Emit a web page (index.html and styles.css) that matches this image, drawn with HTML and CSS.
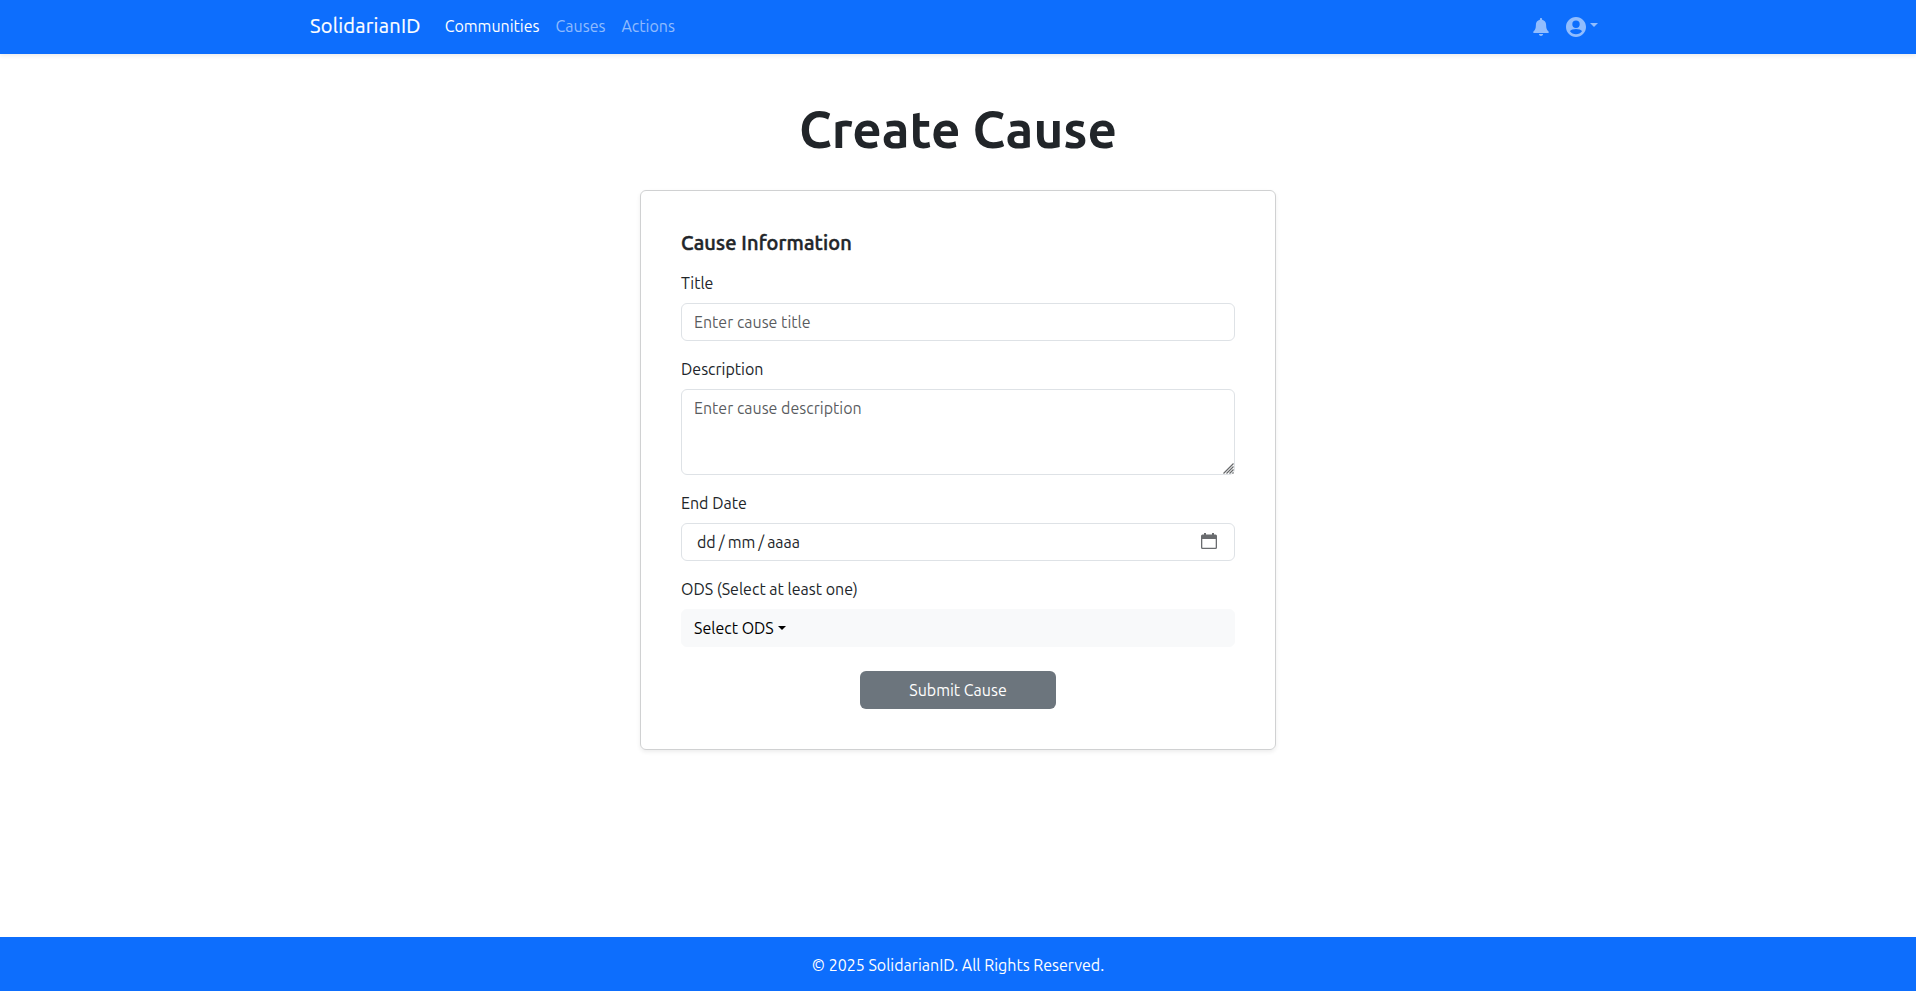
FILE: index.html
```
<!DOCTYPE html>
<html lang="en">
<head>
<meta charset="utf-8">
<title>SolidarianID</title>
<link rel="stylesheet" href="styles.css">
</head>
<body>
<header class="navbar">
  <div class="container">
    <a class="brand">SolidarianID</a>
    <nav class="links">
      <a class="link active">Communities</a>
      <a class="link">Causes</a>
      <a class="link">Actions</a>
    </nav>
    <div class="user">
      <svg class="bell" width="16" height="18" viewBox="0 0 16 18"><path d="M8 0c-.6 0-1.100.5-1.100 1.100v.6C4.300 2.200 2.900 4.200 2.900 6.800c0 3.700-.9 5.200-2.200 6.500-.9.9-.6 1.700.3 1.700h14c.9 0 1.200-.8.3-1.700-1.300-1.300-2.200-2.800-2.200-6.500 0-2.600-1.500-4.600-4-5.100v-.6C9.100.5 8.600 0 8 0zM5.900 16c.2 1.200 1 2 2.100 2s1.900-.8 2.100-2z"/></svg>
      <svg class="avatar" width="20" height="20" viewBox="2 2 20 20"><path d="M12 2C6.480 2 2 6.480 2 12s4.480 10 10 10 10-4.480 10-10S17.520 2 12 2zm0 3.500a3.700 3.700 0 1 1 0 7.400 3.700 3.700 0 0 1 0-7.400zm0 13.700c-2.500 0-4.700-1-6-2.900.5-1.500 3.600-2.300 6-2.300s5.500.8 6 2.300c-1.300 1.900-3.500 2.900-6 2.900z"/></svg>
      <span class="caret"></span>
    </div>
  </div>
</header>
<main class="main">
  <h1 class="page-title">Create Cause</h1>
  <form class="card">
    <h2 class="card-title">Cause Information</h2>
    <div class="field">
      <label class="label" for="title">Title</label>
      <input class="control" id="title" type="text" placeholder="Enter cause title">
    </div>
    <div class="field">
      <label class="label" for="description">Description</label>
      <textarea class="control area" id="description" rows="3" placeholder="Enter cause description"></textarea>
      <svg class="grip" width="11" height="11" viewBox="0 0 11 11"><path d="M0.500 10.500l10-10M3.500 10.500l7-7M6.500 10.500l4-4M9.500 10.500l1-1"/></svg>
    </div>
    <div class="field">
      <span class="label">End Date</span>
      <div class="control date">
        <span class="date-text"><span>dd</span><span>/</span><span>mm</span><span>/</span><span>aaaa</span></span>
        <svg class="calendar" width="16" height="16" viewBox="0 0 16 16"><path fill-rule="evenodd" d="M3 0h2v1.500h6V0h2v1.500h1.500Q16 1.500 16 3v11.500q0 1.500-1.500 1.500h-13Q0 16 0 14.500V3q0-1.500 1.500-1.500H3zM1.300 6v8.200q0 .5.5.5h12.400q.5 0 .5-.5V6z"/></svg>
      </div>
    </div>
    <div class="field">
      <span class="label">ODS (Select at least one)</span>
      <button class="select" type="button">Select ODS<span class="caret"></span></button>
    </div>
    <button class="submit" type="button">Submit Cause</button>
  </form>
</main>
<footer class="footer">© 2025 SolidarianID. All Rights Reserved.</footer>
</body>
</html>
```

FILE: styles.css
```
* { box-sizing: border-box; }
body {
  margin: 0;
  height: 991px;
  display: flex;
  flex-direction: column;
  font: 400 16px/24px Ubuntu, "Noto Sans", sans-serif;
  color: #212529;
  background: #fff;
}
.navbar {
  height: 54px;
  padding-top: 6px;
  background: #0d6efd;
  box-shadow: 0 2px 4px rgba(0, 0, 0, .075);
}
.container {
  width: 1320px;
  height: 40px;
  margin: 0 auto;
  padding: 0 12px;
  display: flex;
  align-items: center;
}
.brand {
  font-size: 20px;
  line-height: 30px;
  letter-spacing: .25px;
  -webkit-text-stroke: .2px;
  color: #fff;
  margin-right: 16px;
}
.links { display: flex; }
.link { padding: 8px; color: rgba(255, 255, 255, .55); }
.link.active { color: #fff; }
.user { margin-left: auto; display: flex; align-items: center; padding-right: 8px; }
.user svg { fill: rgba(255, 255, 255, .55); margin-top: 2px; }
.bell { margin-right: 17px; }
.user .caret { margin-left: 4px; color: rgba(255, 255, 255, .55); margin-top: -2px; }
.caret {
  display: inline-block;
  border-top: 4.8px solid;
  border-left: 4.8px solid transparent;
  border-right: 4.8px solid transparent;
  vertical-align: 4px;
  margin-left: 4px;
}
.main { flex: 1; display: flex; flex-direction: column; align-items: center; padding-top: 44px; }
.page-title {
  margin: 0 0 30px;
  font-size: 51.2px;
  line-height: 62px;
  font-weight: 700;
}
.card {
  width: 636px;
  height: 560px;
  padding: 40px;
  display: flex;
  flex-direction: column;
  border: 1px solid #d0d1d2;
  border-radius: 6px;
  box-shadow: 0 2px 4px rgba(0, 0, 0, .075);
}
.card-title {
  margin: 0 0 16px;
  font-size: 20px;
  line-height: 24px;
  font-weight: 500;
  letter-spacing: .13px;
  -webkit-text-stroke: .5px;
}
.field { position: relative; display: flex; flex-direction: column; margin-bottom: 16px; }
.label { margin-bottom: 8px; }
.control {
  display: block;
  width: 100%;
  height: 38px;
  padding: 6px 12px;
  border: 1px solid #dee2e6;
  border-radius: 6px;
  font: inherit;
  color: inherit;
  background: #fff;
}
.control::placeholder { color: rgba(33, 37, 41, .75); opacity: 1; }
.area { height: 86px; resize: none; }
.grip { position: absolute; right: 1px; bottom: 1px; fill: none; stroke: #66686a; stroke-width: 1.2; }
.date { display: flex; align-items: center; justify-content: space-between; padding: 0 17px 0 15px; }
.date-text { display: flex; gap: 3px; }
.calendar { fill: #6a6c6f; margin-top: -2px; }
.select {
  height: 38px;
  padding: 6px 12px;
  border: 1px solid #f8f9fa;
  border-radius: 6px;
  background: #f8f9fa;
  color: #000;
  font: inherit;
  text-align: left;
}
.submit {
  align-self: center;
  width: 196px;
  height: 38px;
  flex-shrink: 0;
  margin-top: 8px;
  padding: 0;
  border: 0;
  border-radius: 6px;
  background: #6c757d;
  color: #fff;
  font: inherit;
}
.footer {
  height: 54px;
  padding-top: 16px;
  text-align: center;
  background: #0d6efd;
  color: #fff;
}
```
